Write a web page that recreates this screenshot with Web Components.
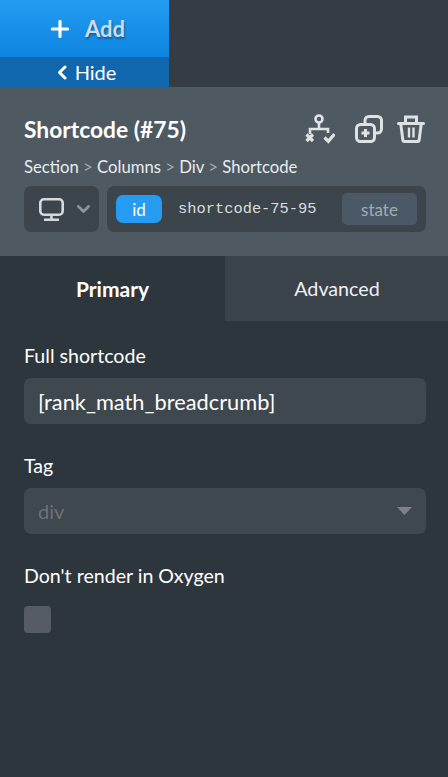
<!DOCTYPE html>
<html>
<head>
<meta charset="utf-8">
<title>Shortcode panel</title>
<style>
  html, body { margin: 0; height: 100%; background: #2e363d; }
  body { font-family: "Lato", "Noto Sans", sans-serif; color: #fff; overflow: hidden; }
</style>
</head>
<body>
<add-bar></add-bar>
<panel-header>
  <span slot="title">Shortcode (#75)</span>
</panel-header>
<panel-tabs></panel-tabs>
<panel-body></panel-body>

<script>
  const FONT = '"Lato", "Noto Sans", sans-serif';

  class AddBar extends HTMLElement {
    constructor () {
      super();
      const shadowRoot = this.attachShadow({ mode: 'open' });
      shadowRoot.innerHTML = `
      <style>
        :host { display: flex; height: 87px; background: #353c43; font-family: ${FONT}; }
        .col { width: 169px; display: flex; flex-direction: column; }
        .add {
          height: 57px; box-sizing: border-box; padding-left: 7px;
          display: flex; align-items: center; justify-content: center; gap: 16px;
          background: linear-gradient(#259cf2, #0c85e0);
          font-size: 22px; font-weight: 700; color: #cfdbe6;
          text-shadow: 1px 2px 2px rgba(0,0,0,.35);
        }
        .hide {
          height: 30px; box-sizing: border-box; padding-left: 4px;
          display: flex; align-items: center; justify-content: center; gap: 8px;
          background: #1167ae; font-size: 20px; color: #fff;
        }
      </style>
      <div class="col">
        <div class="add">
          <svg width="18" height="18" viewBox="0 0 18 18"><path d="M9 1.500v15M1.500 9h15" stroke="#fff" stroke-width="3.200" stroke-linecap="round"/></svg>
          <span>Add</span>
        </div>
        <div class="hide">
          <svg width="10" height="15" viewBox="0 0 10 15"><path d="M8 2L2.500 7.500 8 13" fill="none" stroke="#fff" stroke-width="3" stroke-linecap="round" stroke-linejoin="round"/></svg>
          <span>Hide</span>
        </div>
      </div>`;
    }
  }
  customElements.define('add-bar', AddBar);

  class PanelHeader extends HTMLElement {
    constructor () {
      super();
      const shadowRoot = this.attachShadow({ mode: 'open' });
      shadowRoot.innerHTML = `
      <style>
        :host {
          display: block; box-sizing: border-box; height: 169px; padding: 19px 22px 0 24px;
          background: #4f5962; font-family: ${FONT};
        }
        .top { display: flex; align-items: center; justify-content: space-between; height: 44px; }
        .title { font-size: 22.800px; font-weight: 700; color: #fff; padding-top: 2px; }
        .icons { display: flex; align-items: center; margin: 1px 1px 0 0; }
        .icons svg + svg { margin-left: 14px; }
        .icons svg:first-child { margin-right: 6px; }
        .crumbs { margin-top: 5px; font-size: 16.700px; line-height: 24px; color: #e8edf0; white-space: nowrap; }
        .crumbs i { font-style: normal; color: #a5adb3; }
        .row { display: flex; gap: 8px; margin-top: 7px; height: 46px; }
        .device {
          width: 75px; flex: none; box-sizing: border-box; background: #3c454c; border-radius: 7px;
          display: flex; align-items: center; padding-left: 15px; gap: 13px;
        }
        .sel {
          flex: 1; background: #3c454c; border-radius: 7px; display: flex; align-items: center;
          padding: 0 9px; box-sizing: border-box;
        }
        .id {
          width: 46px; height: 28px; border-radius: 7px; background: #259cf2; color: #fff;
          font-size: 17px; display: flex; align-items: center; justify-content: center;
        }
        .name { margin-left: 16px; font: 15.400px "Liberation Mono", monospace; color: #d8dcdf; flex: 1; white-space: nowrap; }
        .state {
          width: 75px; height: 32px; border-radius: 5px; background: #4a5965; color: #a0abb3;
          font-size: 17px; display: flex; align-items: center; justify-content: center;
        }
      </style>
      <div class="top">
        <div class="title"><slot name="title"></slot></div>
        <div class="icons">
          <svg width="30" height="30" viewBox="0 0 30 30" fill="none" stroke="#dfe2e4" stroke-width="2.600">
            <circle cx="14" cy="5" r="3.500"/>
            <path d="M14 8.500V16M5 20v-5h18v4"/>
            <path d="M1.500 20.500l6.500 6.500M8 20.500l-6.500 6.500" stroke-width="3.200"/>
            <path d="M19.500 23.500l3.800 3.800 6.200-7.300" stroke-width="3.200"/>
          </svg>
          <svg width="28" height="28" viewBox="0 0 28 28" fill="none" stroke="#dfe2e4" stroke-width="3">
            <path d="M10 8V5.500a4 4 0 0 1 4-4h8.500a4 4 0 0 1 4 4V14a4 4 0 0 1-4 4H20"/>
            <rect x="1.500" y="9.500" width="18" height="17" rx="4"/>
            <path d="M10.500 14v8M6.500 18h8"/>
          </svg>
          <svg width="28" height="28" viewBox="0 0 28 28" fill="none" stroke="#dfe2e4" stroke-width="3">
            <path d="M1.500 8.500h25" stroke-linecap="round"/>
            <path d="M8.500 7V2h11v5"/>
            <path d="M3.800 9l2 15.500a2 2 0 0 0 2 2h12.400a2 2 0 0 0 2-2l2-15.500"/>
            <path d="M12 12.500v10M16.500 12.500v10" stroke-width="2.400"/>
          </svg>
        </div>
      </div>
      <div class="crumbs">Section <i>&gt;</i> Columns <i>&gt;</i> Div <i>&gt;</i> Shortcode</div>
      <div class="row">
        <div class="device">
          <svg width="25" height="23" viewBox="0 0 25 23" fill="none" stroke="#d5d9dc" stroke-width="2.600">
            <rect x="1.300" y="1.300" width="22.400" height="15.400" rx="3.500"/>
            <path d="M12.500 17v4.500M5 21.700h15"/>
          </svg>
          <svg width="13" height="8" viewBox="0 0 13 8"><path d="M1.500 1.500l5 5 5-5" fill="none" stroke="#8d959b" stroke-width="2.800" stroke-linecap="round" stroke-linejoin="round"/></svg>
        </div>
        <div class="sel">
          <div class="id">id</div>
          <div class="name">shortcode-75-95</div>
          <div class="state">state</div>
        </div>
      </div>`;
    }
  }
  customElements.define('panel-header', PanelHeader);

  class PanelTabs extends HTMLElement {
    constructor () {
      super();
      const shadowRoot = this.attachShadow({ mode: 'open' });
      shadowRoot.innerHTML = `
      <style>
        :host { display: flex; height: 65px; font-family: ${FONT}; }
        div { display: flex; align-items: center; justify-content: center; }
        .on { width: 225px; background: #2e363d; color: #fff; font-weight: 700; font-size: 21px; }
        .off { flex: 1; background: #3b434a; color: #eef0f2; font-size: 19.700px; padding-left: 1px; }
      </style>
      <div class="on">Primary</div>
      <div class="off">Advanced</div>`;
    }
  }
  customElements.define('panel-tabs', PanelTabs);

  class PanelBody extends HTMLElement {
    constructor () {
      super();
      const shadowRoot = this.attachShadow({ mode: 'open' });
      shadowRoot.innerHTML = `
      <style>
        :host { display: block; padding: 24px 22px 0 24px; font-family: ${FONT}; }
        label { display: block; font-size: 19.600px; line-height: 22px; padding-bottom: 2px; color: #fff; }
        .field {
          box-sizing: border-box; height: 46px; margin-top: 9px; padding: 0 14px; border-radius: 7px;
          background: #3f474f; display: flex; align-items: center; justify-content: space-between;
          font-size: 21.800px; color: #fff;
        }
        .select { color: #6b7278; font-size: 20px; }
        .gap { margin-top: 31px; }
        .check { width: 27px; height: 27px; border-radius: 4px; background: #565c63; margin-top: 17px; }
      </style>
      <label>Full shortcode</label>
      <div class="field">[rank_math_breadcrumb]</div>
      <label class="gap">Tag</label>
      <div class="field select"><span>div</span>
        <svg width="15" height="8" viewBox="0 0 15 8"><path d="M0 0h15L7.500 8z" fill="#7c8288"/></svg>
      </div>
      <label class="gap">Don't render in Oxygen</label>
      <div class="check"></div>`;
    }
  }
  customElements.define('panel-body', PanelBody);
</script>
</body>
</html>
